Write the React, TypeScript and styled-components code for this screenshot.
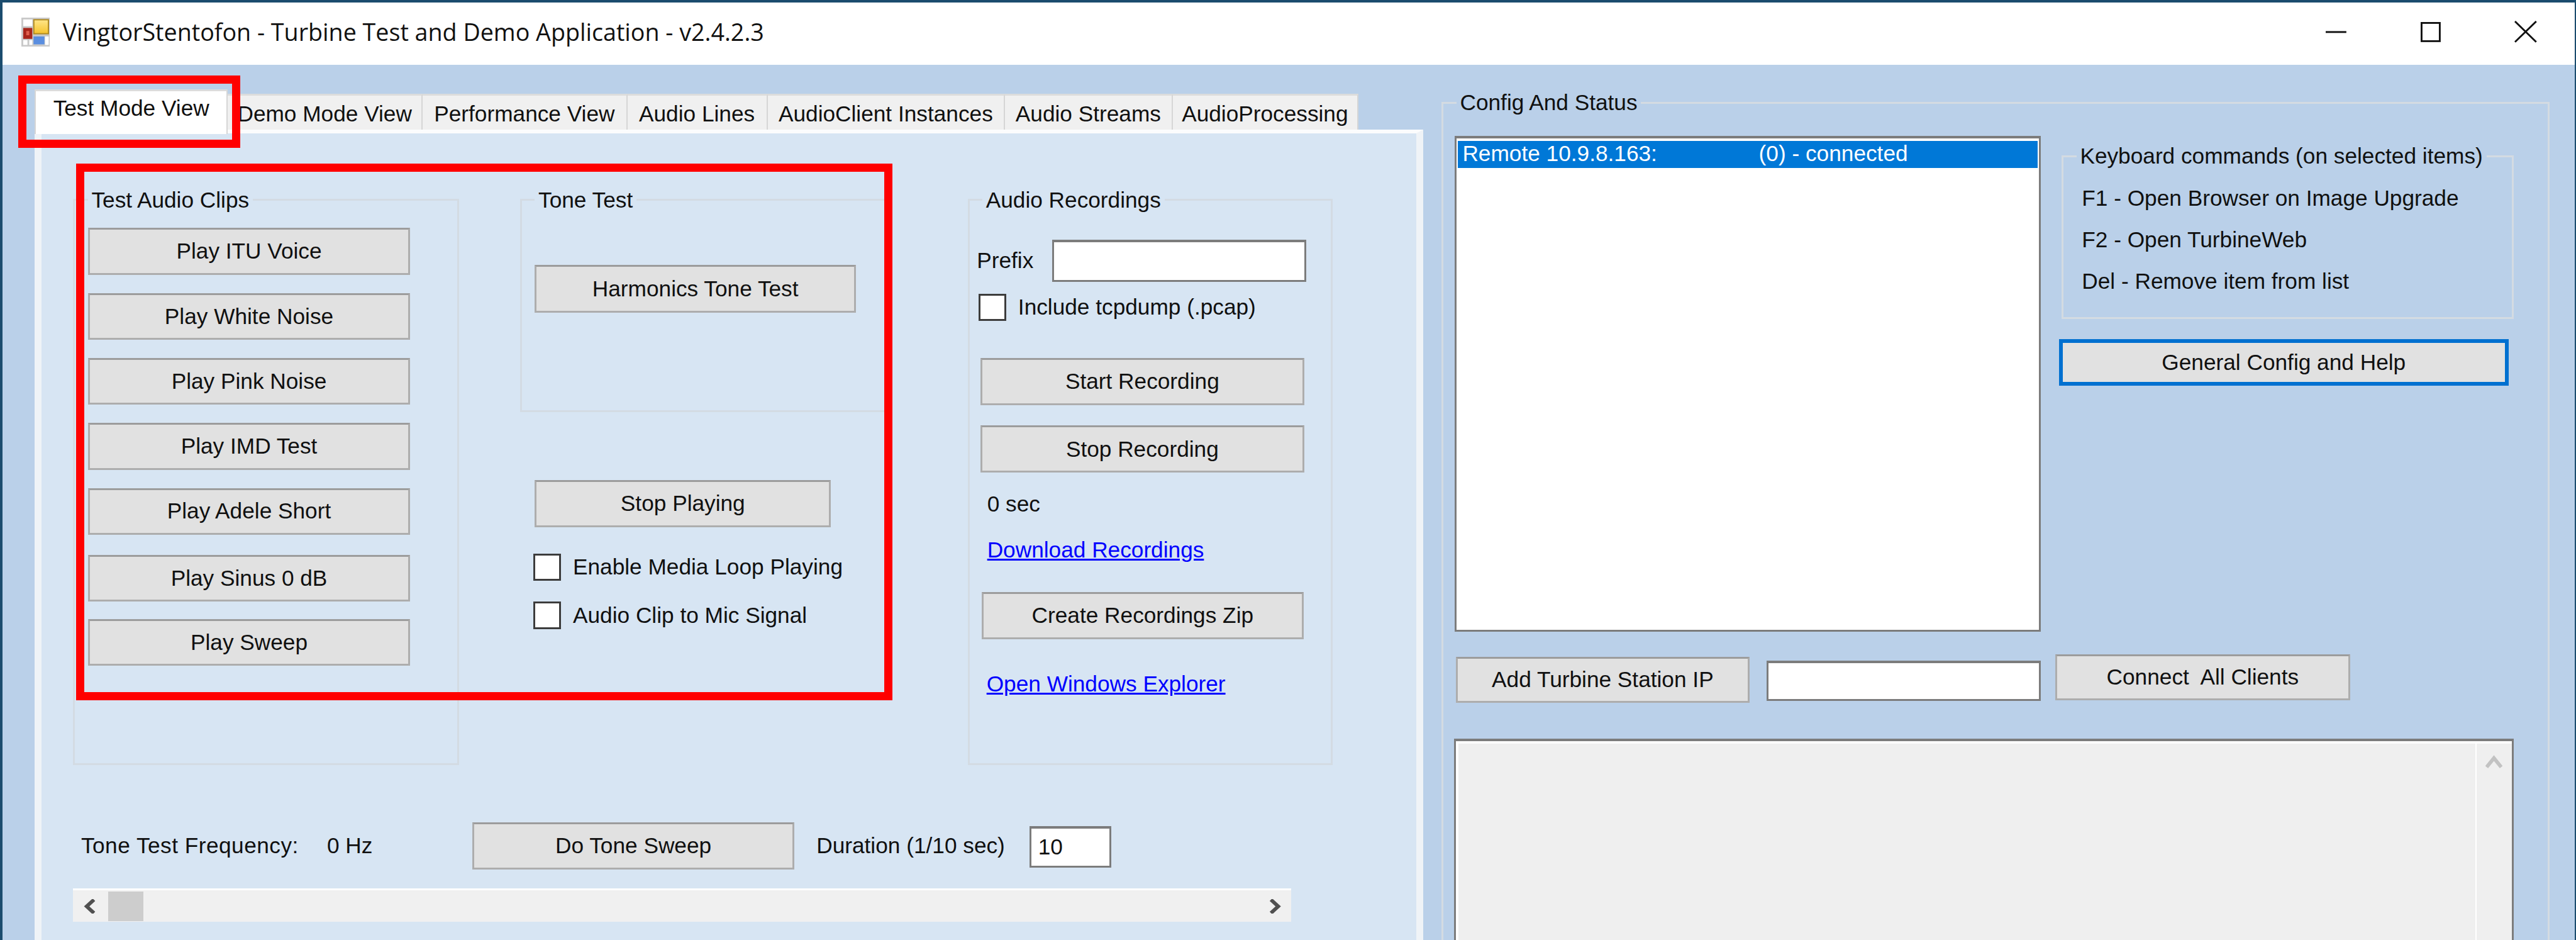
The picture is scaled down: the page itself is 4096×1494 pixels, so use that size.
import styled, { createGlobalStyle } from "styled-components";

// everything below is measured on the 4242px reference, Window scales it down
const GlobalStyle = createGlobalStyle`
  html, body {
    margin: 0;
    overflow: hidden;
    background: #bad0e9;
  }
  * {
    box-sizing: border-box;
  }
`;

const Window = styled.div`
  zoom: 0.96558;
  position: relative;
  width: 4242px;
  height: 1547px;
  overflow: hidden;
  background: #bad0e9;
  border-top: 4.2px solid #1b4c6e;
  border-left: 4.2px solid #1b4c6e;
  border-right: 2.1px solid #1b4c6e;
  font-family: "Liberation Sans", Arial, sans-serif;
  font-size: 36.5px;
  line-height: 40px;
  color: #101010;
`;

const TitleBar = styled.div`
  height: 103px;
  padding: 0 62px 6px 31px;
  display: flex;
  align-items: center;
  background: #fff;
`;

const Title = styled.div`
  margin-left: 21px;
  font-family: "Open Sans", "Noto Sans", sans-serif;
  font-size: 39px;
  color: #111;
`;

const WindowControls = styled.div`
  margin-left: auto;
  display: flex;
  align-items: center;
  gap: 122px;
`;

const Body = styled.div`
  height: 1440px;
  padding-left: 53px;
  display: flex;
  align-items: flex-start;
`;

const LeftPane = styled.div`
  width: 2287px;
  height: 1400px;
  margin-top: 40px;
  display: flex;
  flex-direction: column;
`;

const TabStrip = styled.div`
  height: 66px;
  display: flex;
  align-items: flex-start;
`;

const Tab = styled.div<{ $w: number; $active?: boolean }>`
  position: relative;
  z-index: ${(p) => (p.$active ? 1 : 0)};
  width: ${(p) => p.$w}px;
  height: ${(p) => (p.$active ? 73 : 59)}px;
  margin-top: ${(p) => (p.$active ? 0 : 7)}px;
  padding-top: ${(p) => (p.$active ? 8 : 11)}px;
  text-align: center;
  white-space: nowrap;
  background: ${(p) => (p.$active ? "#fff" : "#f0f0f0")};
  border-top: 3.2px solid #dcdcdc;
  border-right: 2.1px solid #d6d6d6;
  border-left: ${(p) => (p.$active ? "2.1px solid #d6d6d6" : "0")};
`;

const TabPanel = styled.div`
  flex: 1;
  padding: 90px 0 0 52px;
  background: #d7e5f3;
  border: 12px solid #eff3f7;
  border-top: 7px solid #fbfcfd;
  border-bottom: 0;
`;

const GroupsRow = styled.div`
  display: flex;
  align-items: flex-start;
`;

const Group = styled.fieldset<{ $w: number; $h: number; $line?: string }>`
  width: ${(p) => p.$w}px;
  height: ${(p) => p.$h}px;
  margin: 0;
  padding: 0;
  min-width: 0;
  flex: none;
  border: 3.2px solid ${(p) => p.$line ?? "#d3dbe3"};
`;

const GroupTitle = styled.legend`
  margin-left: 21px;
  padding: 0 6px;
  line-height: 40px;
  white-space: nowrap;
`;

const Stack = styled.div<{ $top?: number; $left?: number }>`
  display: flex;
  flex-direction: column;
  align-items: flex-start;
  padding-top: ${(p) => p.$top ?? 0}px;
  padding-left: ${(p) => p.$left ?? 0}px;
`;

const ToneColumn = styled.div`
  width: 605px;
  margin-left: 100px;
  flex: none;
  display: flex;
  flex-direction: column;
  align-items: flex-start;
`;

const RecordingsGroup = styled.div`
  margin-left: 132px;
`;

const Button = styled.button<{ $w: number; $h: number; $top?: number; $left?: number; $focused?: boolean }>`
  width: ${(p) => p.$w}px;
  height: ${(p) => p.$h}px;
  margin: ${(p) => p.$top ?? 0}px 0 0 ${(p) => p.$left ?? 0}px;
  padding: 0;
  flex: none;
  font: inherit;
  color: inherit;
  white-space: pre;
  background: #e1e1e1;
  border: ${(p) => (p.$focused ? "6.3px solid #0070d0" : "3.2px solid #adadad")};
  border-top-color: ${(p) => (p.$focused ? "#0070d0" : "#9c9c9c")};
`;

const CheckRow = styled.div<{ $top: number; $left: number }>`
  margin: ${(p) => p.$top}px 0 0 ${(p) => p.$left}px;
  height: 45px;
  display: flex;
  align-items: center;
  gap: 20px;
  white-space: nowrap;
`;

const CheckBox = styled.span`
  width: 45px;
  height: 45px;
  background: #fff;
  border: 3.2px solid #3c3c3c;
`;

const FormRow = styled.div`
  margin: 45px 0 0 12px;
  display: flex;
  align-items: center;
`;

const FieldLabel = styled.span<{ $w?: number; $left?: number; $spacing?: number }>`
  flex: none;
  width: ${(p) => (p.$w ? `${p.$w}px` : "auto")};
  margin-left: ${(p) => p.$left ?? 0}px;
  letter-spacing: ${(p) => p.$spacing ?? 0}px;
  white-space: nowrap;
`;

const Input = styled.div<{ $w: number; $h: number; $top?: number; $left?: number }>`
  width: ${(p) => p.$w}px;
  height: ${(p) => p.$h}px;
  margin: ${(p) => p.$top ?? 0}px 0 0 ${(p) => p.$left ?? 0}px;
  padding: 10px 0 0 11px;
  flex: none;
  background: #fff;
  border: 3.2px solid #7c7c7c;
  border-top-width: 4.2px;
`;

const Note = styled.div<{ $top: number; $left: number }>`
  margin: ${(p) => p.$top}px 0 0 ${(p) => p.$left}px;
  white-space: nowrap;
`;

const LinkText = styled.a`
  display: block;
  color: #0000ff;
  text-decoration: underline;
  white-space: nowrap;
`;

const BottomRow = styled.div`
  margin: 94px 0 0 13px;
  height: 78px;
  display: flex;
  align-items: center;
`;

const HScroll = styled.div`
  width: 2006px;
  height: 55px;
  margin-top: 31px;
  padding: 1px 17px 0;
  display: flex;
  align-items: center;
  background: #f0f0f0;
  border-top: 3.2px solid #fff;
`;

const HThumb = styled.div`
  width: 58px;
  height: 48px;
  margin-left: 20px;
  background: #cdcdcd;
`;

const HArrowEnd = styled.div`
  margin-left: auto;
  display: flex;
`;

const ConfigPane = styled.div`
  margin: 42px 0 0 30px;
`;

const ConfigBody = styled.div`
  padding: 35px 0 0 18px;
`;

const ConfigTop = styled.div`
  display: flex;
  align-items: flex-start;
`;

const ListBox = styled.div`
  width: 965px;
  height: 816px;
  padding: 4px 2px;
  flex: none;
  background: #fff;
  border: 3.2px solid #7c7c7c;
  border-top-width: 4.2px;
`;

const ListItem = styled.div`
  height: 44px;
  padding: 1px 0 0 8px;
  display: flex;
  color: #fff;
  white-space: nowrap;
  background: #0078d7;
`;

const ListName = styled.span`
  width: 488px;
`;

const SideColumn = styled.div`
  margin-left: 30px;
  display: flex;
  flex-direction: column;
  align-items: flex-start;
`;

const KeyboardGroup = styled.div`
  margin: 13px 0 33px 5px;
`;

const KeyLine = styled.div`
  height: 68.5px;
  padding-top: 10px;
  white-space: nowrap;
`;

const ConnectRow = styled.div`
  margin-top: 39px;
  display: flex;
  align-items: flex-start;
`;

const LogBox = styled.div`
  width: 1745px;
  height: 420px;
  margin: 59px 0 0 -1px;
  display: flex;
  justify-content: flex-end;
  background: #efefef;
  border: 3.2px solid #7c7c7c;
  border-top-width: 4.2px;
  border-bottom: 0;
  box-shadow: inset 4px 4px 0 #fff;
`;

const VScroll = styled.div`
  width: 60px;
  padding-top: 23px;
  display: flex;
  justify-content: center;
  align-items: flex-start;
  border-left: 2.1px solid #fff;
`;

const Annotation = styled.div<{ $x: number; $y: number; $w: number; $h: number }>`
  position: absolute;
  z-index: 2;
  left: ${(p) => p.$x}px;
  top: ${(p) => p.$y}px;
  width: ${(p) => p.$w}px;
  height: ${(p) => p.$h}px;
  border: 14px solid #ff0000;
`;

const AppIcon = () => (
  <svg width="47" height="48" viewBox="0 0 47 48">
    <defs>
      <linearGradient id="gold" x1="0" y1="0" x2="0" y2="1">
        <stop offset="0" stopColor="#ffe68a" />
        <stop offset="1" stopColor="#f5c32c" />
      </linearGradient>
    </defs>
    <rect width="47" height="48" fill="#c9c9c9" />
    <rect x="3" y="3" width="15" height="11" fill="#fff" />
    <rect x="20.5" y="3.5" width="24" height="23" fill="url(#gold)" stroke="#b08a20" strokeWidth="2" />
    <rect x="3" y="17" width="15" height="18" fill="#a8261c" />
    <rect x="8" y="22" width="5" height="7" fill="#e0604e" />
    <rect x="20" y="31" width="18" height="13" fill="#5a8ee0" />
    <rect x="3" y="37" width="7" height="8" fill="#fff" />
    <rect x="13" y="37" width="5" height="8" fill="#fff" />
    <rect x="39" y="31" width="6" height="14" fill="#fff" />
  </svg>
);

const MinimizeIcon = () => (
  <svg width="34" height="34" viewBox="0 0 34 34">
    <rect x="0" y="16" width="34" height="3" fill="#111" />
  </svg>
);

const MaximizeIcon = () => (
  <svg width="33" height="33" viewBox="0 0 33 33">
    <rect x="1.5" y="1.5" width="30" height="30" fill="none" stroke="#111" strokeWidth="3" />
  </svg>
);

const CloseIcon = () => (
  <svg width="37" height="36" viewBox="0 0 37 36">
    <path d="M1 1 L36 35 M36 1 L1 35" stroke="#111" strokeWidth="3" fill="none" />
  </svg>
);

const ChevronLeft = () => (
  <svg width="21" height="24" viewBox="0 0 21 24">
    <path d="M17 1 L5 12 L17 23" stroke="#505050" strokeWidth="6" fill="none" />
  </svg>
);

const ChevronRight = () => (
  <svg width="21" height="24" viewBox="0 0 21 24">
    <path d="M4 1 L16 12 L4 23" stroke="#505050" strokeWidth="6" fill="none" />
  </svg>
);

const ChevronUp = () => (
  <svg width="28" height="22" viewBox="0 0 28 22">
    <path d="M2 20 L14 5 L26 20" stroke="#c2c2c2" strokeWidth="6" fill="none" />
  </svg>
);

const TABS = [
  { label: "Test Mode View", w: 318, active: true },
  { label: "Demo Mode View", w: 321 },
  { label: "Performance View", w: 337 },
  { label: "Audio Lines", w: 231 },
  { label: "AudioClient Instances", w: 391 },
  { label: "Audio Streams", w: 276 },
  { label: "AudioProcessing", w: 306 },
];

// the row spacing is not quite even in the reference
const CLIPS = [
  { label: "Play ITU Voice", top: 26 },
  { label: "Play White Noise", top: 30 },
  { label: "Play Pink Noise", top: 30 },
  { label: "Play IMD Test", top: 30 },
  { label: "Play Adele Short", top: 30 },
  { label: "Play Sinus 0 dB", top: 33 },
  { label: "Play Sweep", top: 29 },
];

export default function App() {
  return (
    <Window>
      <GlobalStyle />
      <TitleBar>
        <AppIcon />
        <Title>VingtorStentofon - Turbine Test and Demo Application - v2.4.2.3</Title>
        <WindowControls>
          <MinimizeIcon />
          <MaximizeIcon />
          <CloseIcon />
        </WindowControls>
      </TitleBar>
      <Body>
        <LeftPane>
          <TabStrip>
            {TABS.map((tab) => (
              <Tab key={tab.label} $w={tab.w} $active={tab.active}>
                {tab.label}
              </Tab>
            ))}
          </TabStrip>
          <TabPanel>
            <GroupsRow>
              <Group $w={636} $h={950}>
                <GroupTitle>Test Audio Clips</GroupTitle>
                <Stack $left={21}>
                  {CLIPS.map((clip) => (
                    <Button key={clip.label} $w={531} $h={77} $top={clip.top}>
                      {clip.label}
                    </Button>
                  ))}
                </Stack>
              </Group>
              <ToneColumn>
                <Group $w={605} $h={369}>
                  <GroupTitle>Tone Test</GroupTitle>
                  <Stack $top={87} $left={21}>
                    <Button $w={529} $h={78}>Harmonics Tone Test</Button>
                  </Stack>
                </Group>
                <Button $w={488} $h={78} $top={112} $left={24}>Stop Playing</Button>
                <CheckRow $top={43} $left={22}>
                  <CheckBox />
                  Enable Media Loop Playing
                </CheckRow>
                <CheckRow $top={34} $left={22}>
                  <CheckBox />
                  Audio Clip to Mic Signal
                </CheckRow>
              </ToneColumn>
              <RecordingsGroup>
                <Group $w={601} $h={950}>
                  <GroupTitle>Audio Recordings</GroupTitle>
                  <FormRow>
                    <FieldLabel $w={124}>Prefix</FieldLabel>
                    <Input $w={418} $h={70} />
                  </FormRow>
                  <CheckRow $top={19} $left={15}>
                    <CheckBox />
                    Include tcpdump (.pcap)
                  </CheckRow>
                  <Stack $left={18}>
                    <Button $w={533} $h={78} $top={61}>Start Recording</Button>
                    <Button $w={533} $h={78} $top={33}>Stop Recording</Button>
                  </Stack>
                  <Note $top={32} $left={29}>0 sec</Note>
                  <Note $top={35} $left={29}>
                    <LinkText>Download Recordings</LinkText>
                  </Note>
                  <Button $w={530} $h={78} $top={49} $left={20}>Create Recordings Zip</Button>
                  <Note $top={54} $left={28}>
                    <LinkText>Open Windows Explorer</LinkText>
                  </Note>
                </Group>
              </RecordingsGroup>
            </GroupsRow>
            <BottomRow>
              <FieldLabel $w={405} $spacing={0.5}>Tone Test Frequency:</FieldLabel>
              <FieldLabel $w={239}>0 Hz</FieldLabel>
              <Button $w={531} $h={78}>Do Tone Sweep</Button>
              <FieldLabel $w={351} $left={36}>Duration (1/10 sec)</FieldLabel>
              <Input $w={135} $h={68} $top={4}>10</Input>
            </BottomRow>
            <HScroll>
              <ChevronLeft />
              <HThumb />
              <HArrowEnd>
                <ChevronRight />
              </HArrowEnd>
            </HScroll>
          </TabPanel>
        </LeftPane>
        <ConfigPane>
          <Group $w={1824} $h={1500} $line="#d4dbe2">
            <GroupTitle>Config And Status</GroupTitle>
            <ConfigBody>
              <ConfigTop>
                <ListBox>
                  <ListItem>
                    <ListName>Remote 10.9.8.163:</ListName>
                    <span>(0) - connected</span>
                  </ListItem>
                </ListBox>
                <SideColumn>
                  <KeyboardGroup>
                    <Group $w={744} $h={288} $line="#d4dbe2">
                      <GroupTitle>Keyboard commands (on selected items)</GroupTitle>
                      <Stack $top={19} $left={30}>
                        <KeyLine>F1 - Open Browser on Image Upgrade</KeyLine>
                        <KeyLine>F2 - Open TurbineWeb</KeyLine>
                        <KeyLine>Del - Remove item from list</KeyLine>
                      </Stack>
                    </Group>
                  </KeyboardGroup>
                  <Button $w={741} $h={77} $focused>General Config and Help</Button>
                </SideColumn>
              </ConfigTop>
              <ConnectRow>
                <Button $w={484} $h={76} $top={2} $left={2}>Add Turbine Station IP</Button>
                <Input $w={451} $h={67} $top={8} $left={28} />
                <Button $w={486} $h={76} $top={-2} $left={24}>Connect  All Clients</Button>
              </ConnectRow>
              <LogBox>
                <VScroll>
                  <ChevronUp />
                </VScroll>
              </LogBox>
            </ConfigBody>
          </Group>
        </ConfigPane>
      </Body>
      <Annotation $x={26} $y={120} $w={366} $h={119} />
      <Annotation $x={121} $y={265} $w={1344} $h={884} />
    </Window>
  );
}
